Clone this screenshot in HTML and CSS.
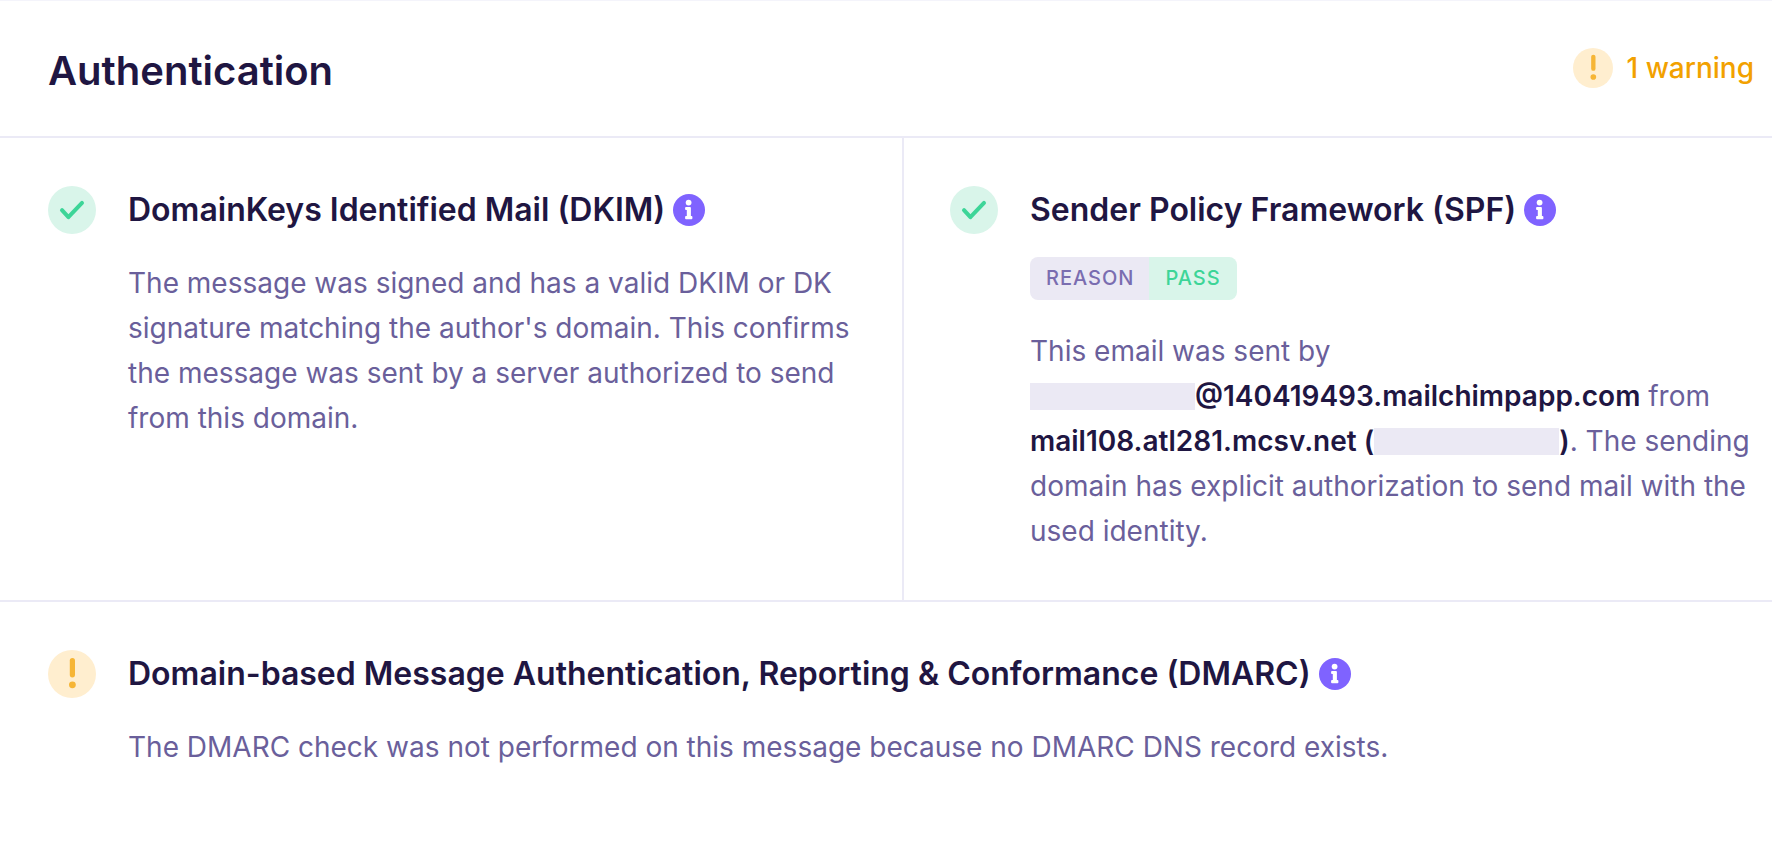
FILE: index.html
```html
<!DOCTYPE html>
<html lang="en">
<head>
<meta charset="utf-8">
<meta name="viewport" content="width=device-width, initial-scale=1">
<title>Authentication</title>
<link rel="stylesheet" href="styles.css">
</head>
<body>
<svg class="defs" width="0" height="0" aria-hidden="true">
  <symbol id="check" viewBox="0 0 48 48">
    <circle cx="24" cy="24" r="24" fill="#d9f5ea"/>
    <path d="M14 24.2l6.4 7L34 16.9" fill="none" stroke="#3dd598" stroke-width="4" stroke-linecap="round" stroke-linejoin="round"/>
  </symbol>
  <symbol id="warn" viewBox="0 0 48 48">
    <circle cx="24" cy="24" r="24" fill="#ffeecf"/>
    <path d="M24.4 10.6v14.2" fill="none" stroke="#f6b535" stroke-width="5.2" stroke-linecap="round"/>
    <circle cx="24.4" cy="34.8" r="3.4" fill="#f6b535"/>
  </symbol>
  <symbol id="info" viewBox="0 0 32 32">
    <circle cx="16" cy="16" r="16" fill="#7f63ff"/>
    <circle cx="15.6" cy="8.6" r="2.9" fill="#fff"/>
    <path d="M13 13h4a.9.9 0 0 1 .9.9V22h.6a.9.9 0 0 1 .9.9v1.4a.9.9 0 0 1-.9.9H13a.9.9 0 0 1-.9-.9v-1.4a.9.9 0 0 1 .9-.9h.8v-6H13a.9.9 0 0 1-.9-.9v-1.2A.9.9 0 0 1 13 13z" fill="#fff"/>
  </symbol>
</svg>
<main class="panel">
  <header class="panel-header">
    <h1 class="panel-title">Authentication</h1>
    <p class="summary"><svg class="summary-icon" aria-hidden="true"><use href="#warn"/></svg>1 warning</p>
  </header>
  <div class="checks">
    <section class="check">
      <svg class="status-icon" role="img" aria-label="Passed"><use href="#check"/></svg>
      <div class="check-body">
        <h2 class="check-title">DomainKeys Identified Mail (DKIM)<button class="info" type="button" aria-label="About DKIM"><svg class="info-icon"><use href="#info"/></svg></button></h2>
        <p class="text">The message was signed and has a valid DKIM or DK signature matching the author's domain. This confirms the message was sent by a server authorized to send from this domain.</p>
      </div>
    </section>
    <section class="check check-split">
      <svg class="status-icon" role="img" aria-label="Passed"><use href="#check"/></svg>
      <div class="check-body">
        <h2 class="check-title">Sender Policy Framework (SPF)<button class="info" type="button" aria-label="About SPF"><svg class="info-icon"><use href="#info"/></svg></button></h2>
        <p class="badge"><span class="badge-key">REASON</span><span class="badge-value">PASS</span></p>
        <p class="text">This email was sent by <strong class="strong"><span class="nowrap"><span class="redacted redacted-user"></span>@140419493.mailchimpapp.com</span></strong> from <strong class="strong">mail108.atl281.mcsv.net <span class="nowrap">(<span class="redacted redacted-ip"></span>)</span></strong>. The sending domain has explicit authorization to send mail with the used identity.</p>
      </div>
    </section>
  </div>
  <section class="check">
    <svg class="status-icon" role="img" aria-label="Warning"><use href="#warn"/></svg>
    <div class="check-body">
      <h2 class="check-title">Domain-based Message Authentication, Reporting &amp; Conformance (DMARC)<button class="info" type="button" aria-label="About DMARC"><svg class="info-icon"><use href="#info"/></svg></button></h2>
      <p class="text">The DMARC check was not performed on this message because no DMARC DNS record exists.</p>
    </div>
  </section>
</main>
</body>
</html>
```
FILE: styles.css
```css
* { box-sizing: border-box; }

body {
  margin: 0;
  background: #fff;
  color: #1f1642;
  font-family: Inter, "Liberation Sans", sans-serif;
}

h1, h2, p { margin: 0; }

.defs { position: absolute; }

.panel { border-top: 1px solid #f4f4fb; }

.panel-header {
  display: flex;
  align-items: flex-start;
  justify-content: space-between;
  padding: 42px 18px 37px 48px;
  border-bottom: 2px solid #ebeaf6;
}

.panel-title {
  font-size: 40px;
  line-height: 56px;
  font-weight: 600;
}

.summary {
  display: flex;
  align-items: center;
  gap: 14px;
  color: #f2a100;
  font-size: 28px;
  line-height: 50px;
  font-weight: 500;
}

.summary-icon { width: 40px; height: 40px; }

.checks {
  display: grid;
  grid-template-columns: 902fr 870fr;
  border-bottom: 2px solid #ebeaf6;
}

.check {
  display: flex;
  align-items: flex-start;
  gap: 32px;
  padding: 48px 16px 46px 48px;
}

.check-split {
  padding-left: 46px;
  border-left: 2px solid #ebeaf6;
}

.status-icon { flex: none; width: 48px; height: 48px; }

.check-body { flex: 1; min-width: 0; }

.check-title {
  display: flex;
  align-items: center;
  gap: 8px;
  margin-bottom: 27px;
  font-size: 32px;
  line-height: 48px;
  font-weight: 600;
}

.info {
  display: flex;
  flex: none;
  padding: 0;
  border: 0;
  background: none;
  cursor: pointer;
}

.info-icon { width: 32px; height: 32px; }

.badge {
  display: flex;
  width: max-content;
  margin: -4px 0 29px;
  border-radius: 8px;
  overflow: hidden;
  font-size: 20px;
  line-height: 43px;
  font-weight: 500;
  letter-spacing: 1px;
}

.badge-key {
  padding: 0 15px 0 16px;
  background: #ebe9f4;
  color: #7a6db0;
}

.badge-value {
  padding: 0 16px;
  background: #d9f5ea;
  color: #3dd598;
}

.text {
  color: #6a5f9b;
  font-size: 28px;
  line-height: 45px;
}

.strong { color: #1f1642; font-weight: 600; }

.nowrap { white-space: nowrap; }

.redacted {
  display: inline-block;
  height: 27px;
  background: #ebe9f4;
  vertical-align: -4px;
}

.redacted-user { width: 165px; }

.redacted-ip { width: 185px; }
```
